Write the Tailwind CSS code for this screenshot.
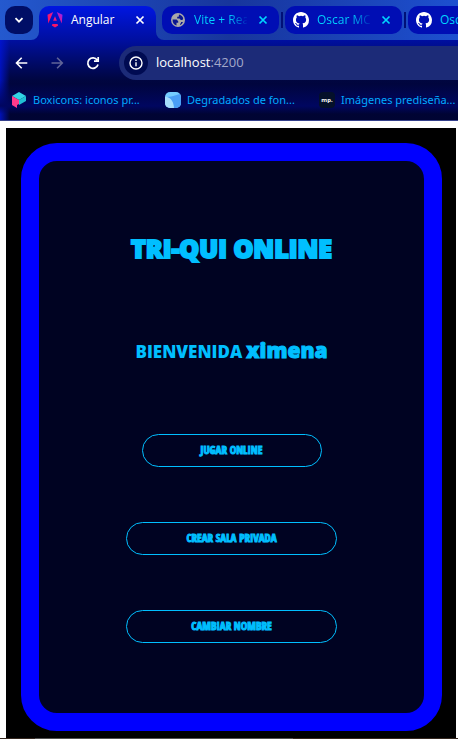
<!DOCTYPE html>
<html lang="es">
<head>
<meta charset="utf-8">
<meta name="viewport" content="width=device-width, initial-scale=1">
<title>Angular</title>
<script src="https://cdn.jsdelivr.net/npm/@tailwindcss/browser@4"></script>
</head>
<body class="flex min-h-screen flex-col overflow-hidden bg-white font-['Open_Sans','Noto_Sans',sans-serif] text-xs">
<svg class="hidden" aria-hidden="true">
  <symbol id="close" viewBox="0 0 10 10"><path d="M1.5 1.5l7 7M8.5 1.5l-7 7" stroke="currentColor" stroke-width="1.7" fill="none"/></symbol>
  <symbol id="github" viewBox="0 0 16 16"><path fill="currentColor" d="M8 0C3.58 0 0 3.58 0 8c0 3.54 2.29 6.53 5.47 7.59.4.07.55-.17.55-.38 0-.19-.01-.82-.01-1.49-2.01.37-2.53-.49-2.69-.94-.09-.23-.48-.94-.82-1.13-.28-.15-.68-.52-.01-.53.63-.01 1.08.58 1.23.82.72 1.21 1.87.87 2.33.66.07-.52.28-.87.51-1.07-1.78-.2-3.64-.89-3.64-3.95 0-.87.31-1.59.82-2.15-.08-.2-.36-1.02.08-2.12 0 0 .67-.21 2.2.82a7.6 7.6 0 0 1 4 0c1.53-1.04 2.2-.82 2.2-.82.44 1.1.16 1.92.08 2.12.51.56.82 1.27.82 2.15 0 3.07-1.87 3.75-3.65 3.95.29.25.54.73.54 1.48 0 1.07-.01 1.93-.01 2.2 0 .21.15.46.55.38A8.01 8.01 0 0 0 16 8c0-4.42-3.58-8-8-8z"/></symbol>
</svg>

<header class="shrink-0 border-b border-[#35408c] bg-[#000433]">
  <div class="flex h-10 items-start overflow-hidden bg-linear-to-r from-[#2459cf] via-[#17359c] to-[#1d50d0] pt-1.5 pl-[5px]">
    <button aria-label="Buscar pestañas" class="mr-1.5 flex size-7 shrink-0 items-center justify-center rounded-[10px] bg-[#000e66] text-white">
      <svg class="size-[10px]" viewBox="0 0 10 10"><path d="M1.5 3.2L5 6.7l3.5-3.5" fill="none" stroke="currentColor" stroke-width="1.8"/></svg>
    </button>
    <div class="relative mr-1.5 flex h-[34px] w-[117px] shrink-0 items-start rounded-t-[10px] bg-linear-to-b from-[#0016e2] to-[#000fa0] px-2 text-white">
      <svg class="absolute bottom-0 -left-2 size-2" viewBox="0 0 8 8"><path d="M8 0v8H0a8 8 0 0 0 8-8z" fill="#000fa0"/></svg>
      <svg class="absolute -right-2 bottom-0 size-2" viewBox="0 0 8 8"><path d="M0 0v8h8a8 8 0 0 1-8-8z" fill="#000fa0"/></svg>
      <div class="flex h-7 w-full items-center">
        <svg class="mr-2 size-4 shrink-0" viewBox="0 0 16 16">
          <defs><linearGradient id="ang" x1="0" y1="1" x2="1" y2="0"><stop offset="0" stop-color="#ff0a50"/><stop offset=".5" stop-color="#f01878"/><stop offset="1" stop-color="#8a20ff"/></linearGradient></defs>
          <path d="M9.8 0l5.7 2.7-.8 8.7zM11.2 13.5L8 15.6l-3.2-2.1.7-1.5h5zM6.1 8.7L8 4.3l1.9 4.4zM1.3 11.4L.5 2.7 6.2 0z" fill="url(#ang)"/>
        </svg>
        <span class="grow">Angular</span>
        <button aria-label="Cerrar Angular" class="mr-[3px]"><svg class="size-[10px]"><use href="#close"/></svg></button>
      </div>
    </div>
    <div class="flex h-7 w-[117px] shrink-0 items-center rounded-[10px] bg-[#000eb4] pr-[11px] pl-[9px] text-[#00d5ff]">
      <svg class="mr-[9px] size-[14px] shrink-0" viewBox="0 0 14 14"><circle cx="7" cy="7" r="7" fill="#aaa9a8"/><path d="M1.6 6.5h4l1.6 1.7v1.5H5.5v2.7C3 12 1.4 9.5 1.6 6.5zM8 1.6c1.8.3 3.5 1.6 4.2 3.7l-.7 1.7H9.8L8.5 5.5H6.2V3.8h1.5zM10 9h2c-.7 1.6-1.6 2.5-3 3v-1.5h1z" fill="#0a1690"/></svg>
      <span class="w-[53px] overflow-hidden bg-linear-to-r from-[#00d5ff] from-65% to-[#00d5ff]/10 bg-clip-text whitespace-nowrap text-transparent">Vite + Rea</span>
      <button aria-label="Cerrar Vite + React" class="ml-auto"><svg class="size-[10px]"><use href="#close"/></svg></button>
    </div>
    <i class="mx-0.5 mt-1.5 h-4 w-0.5 shrink-0 bg-[#001078]"></i>
    <div class="flex h-7 w-[117px] shrink-0 items-center rounded-[10px] bg-[#000eb4] pr-[11px] pl-2 text-[#00d5ff]">
      <svg class="mr-2 size-4 shrink-0 text-white"><use href="#github"/></svg>
      <span class="w-[53px] overflow-hidden bg-linear-to-r from-[#00d5ff] from-65% to-[#00d5ff]/10 bg-clip-text whitespace-nowrap text-transparent">Oscar MC</span>
      <button aria-label="Cerrar Oscar" class="ml-auto"><svg class="size-[10px]"><use href="#close"/></svg></button>
    </div>
    <i class="mx-0.5 mt-1.5 h-4 w-0.5 shrink-0 bg-[#001078]"></i>
    <div class="flex h-7 w-[117px] shrink-0 items-center rounded-[10px] bg-[#000eb4] pl-2 text-[#00d5ff]">
      <svg class="mr-2 size-4 shrink-0 text-white"><use href="#github"/></svg>
      <span>Osc</span>
    </div>
  </div>

  <div class="relative bg-linear-to-b from-[#000fa0] via-[#000538] via-55% to-[#000433]">
  <div class="absolute inset-y-0 left-0 w-2.5 bg-linear-to-r from-[#0014d8]/80 to-transparent"></div>
  <div class="relative flex h-10 items-center pt-1.5 text-white">
    <button aria-label="Atrás" class="ml-3.5 size-4"><svg viewBox="0 0 16 16"><path d="M13.3 8H2.5M7.7 2.8L2.5 8l5.2 5.2" fill="none" stroke="currentColor" stroke-width="1.6"/></svg></button>
    <button aria-label="Adelante" class="ml-5 size-4 text-[#606498]"><svg viewBox="0 0 16 16"><path d="M1.5 8h10.8M7.1 2.8L12.3 8l-5.2 5.2" fill="none" stroke="currentColor" stroke-width="1.6"/></svg></button>
    <button aria-label="Recargar" class="ml-[19px] size-4"><svg viewBox="0 0 16 16"><path d="M12.2 5A5.2 5.2 0 1 0 13 9.5M13.2 2v4.2H9" fill="none" stroke="currentColor" stroke-width="1.7"/></svg></button>
    <div class="ml-[18px] flex h-[34px] grow items-center rounded-l-full bg-[#1c2b78] pl-[5px]">
      <button aria-label="Información del sitio" class="flex size-6 shrink-0 items-center justify-center rounded-full bg-[#000b52]"><svg class="size-[14px]" viewBox="0 0 14 14"><circle cx="7" cy="7" r="6" fill="none" stroke="currentColor" stroke-width="1.4"/><path d="M7 6.2v4M7 3.5v1.4" stroke="currentColor" stroke-width="1.4"/></svg></button>
      <a href="#" class="ml-2 text-[13px]">localhost<span class="text-[#a3a8ca]">:4200</span></a>
    </div>
  </div>
  <nav aria-label="Marcadores" class="relative flex h-10 items-center overflow-hidden bg-linear-to-b from-transparent via-[#000660] via-65% to-transparent to-85% pl-[11px] font-['Noto_Sans','Open_Sans',sans-serif] text-[11px] whitespace-nowrap text-[#00aaff]">
    <a href="#" class="mr-[21px] flex w-[133px] shrink-0 items-center gap-1.5"><svg class="size-4 shrink-0" viewBox="0 0 16 16"><path d="M1 4L8 0l7 4-7 4z" fill="#32d5e5"/><path d="M1 4l7 4v4l-2 1v3l-5-3z" fill="#ff3a8c"/><path d="M8 8l7-4v5l-7 4z" fill="#21c0d4"/></svg>Boxicons: iconos pr...</a>
    <a href="#" class="mr-[21px] flex w-[133px] shrink-0 items-center gap-1.5"><svg class="size-4 shrink-0" viewBox="0 0 16 16"><rect width="16" height="16" rx="5" fill="#75ccff"/><path d="M0 5C5 4 9 9 9 16H5a5 5 0 0 1-5-5z" fill="#a5dcfc"/><path d="M2 5C8 5 13 2 15 2c1 2 1 4 1 9a5 5 0 0 1-5 5H9C9 10 6 6 2 5z" fill="#4a9df5"/></svg>Degradados de fon...</a>
    <a href="#" class="flex shrink-0 items-center gap-1.5"><span class="flex size-4 items-center justify-center rounded-sm bg-[#04102a] text-[6px] font-bold text-white">mp.</span>Imágenes prediseña...</a>
  </nav>
  </div>
</header>

<main class="mt-[7px] mr-0.5 ml-1.5 flex grow flex-col bg-black px-[15px] pt-[15px] pb-[7px]">
  <section class="mr-[-1px] flex grow flex-col items-center rounded-[36px] border-[18px] border-[#0000ff] bg-[#000322] pt-[67px] text-[#00bfff]">
    <h1 class="text-[25px] leading-10 font-extrabold whitespace-nowrap [-webkit-text-stroke:2px_#00bfff]">TRI-QUI ONLINE</h1>
    <h2 class="mt-[62px] flex items-baseline gap-1 leading-10 whitespace-nowrap"><span class="text-[17px] font-extrabold">BIENVENIDA</span><span class="text-[21px] font-extrabold [-webkit-text-stroke:1px_#00bfff]">ximena</span></h2>
    <div class="mt-[62px] flex flex-col items-center gap-[55px] font-['Open_Sans_Condensed',sans-serif] text-[11px] font-bold [-webkit-text-stroke:1px_#00bfff]">
      <button class="h-[33px] w-[180px] rounded-full border border-[#00bfff]">JUGAR ONLINE</button>
      <button class="h-[33px] w-[211px] rounded-full border border-[#00bfff]">CREAR SALA PRIVADA</button>
      <button class="h-[33px] w-[211px] rounded-full border border-[#00bfff]">CAMBIAR NOMBRE</button>
    </div>
  </section>
</main>
<footer class="flex h-px shrink-0 bg-[#34271f]"><i class="ml-[35px] w-[258px] bg-[#51504f]"></i></footer>
</body>
</html>
